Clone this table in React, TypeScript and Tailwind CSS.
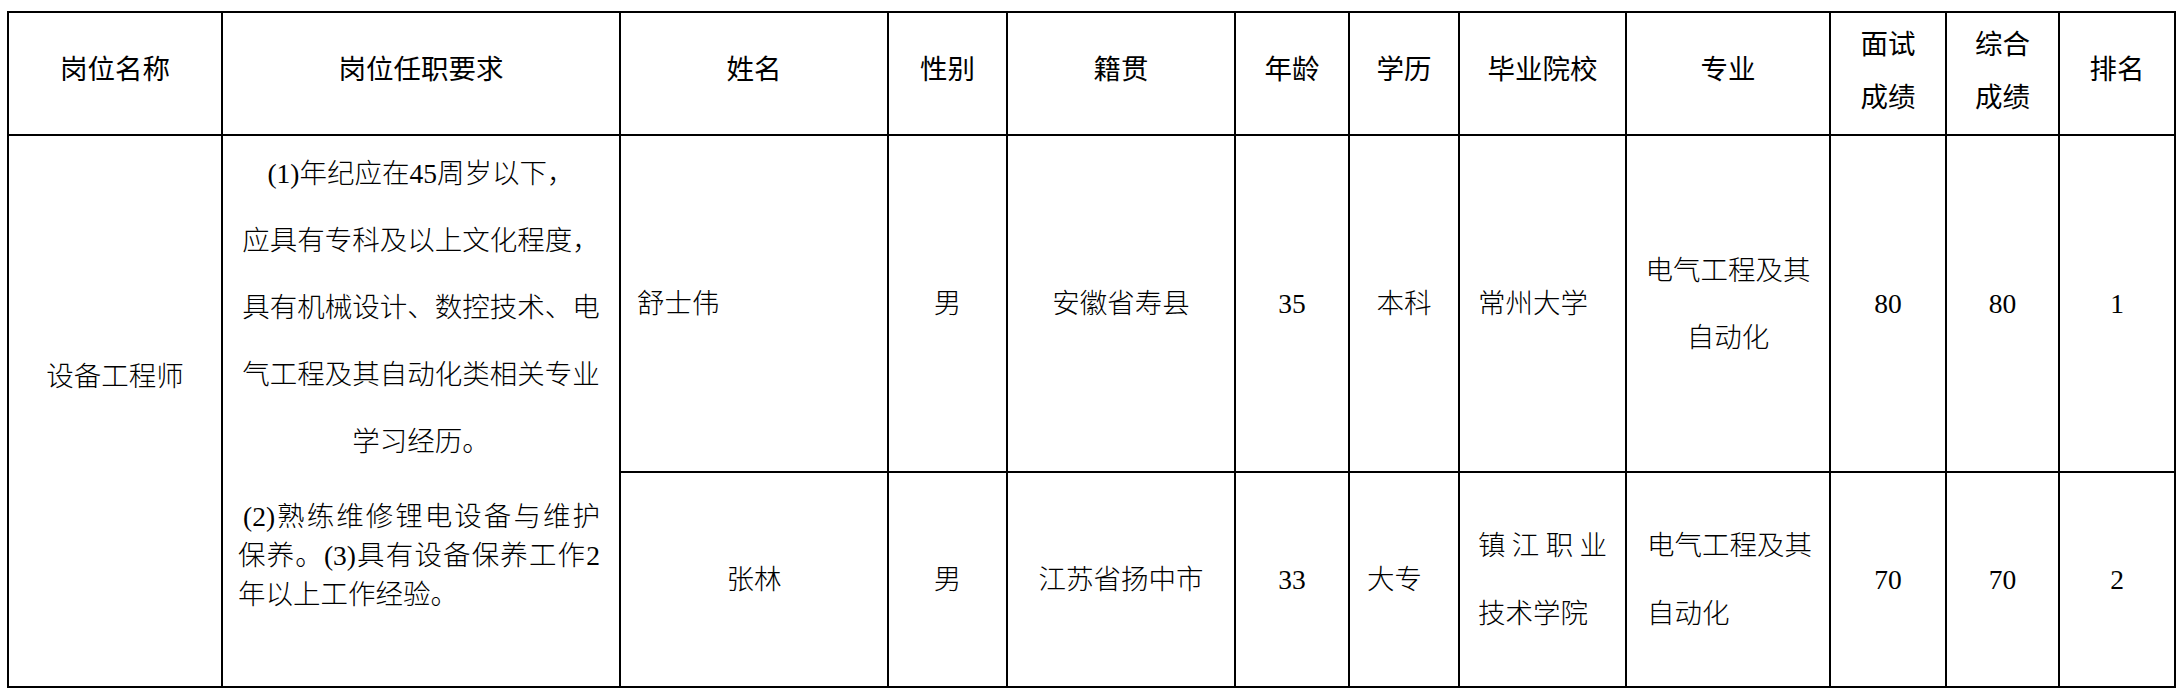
const cell = 'border-2 border-black p-0 align-middle';

const headers: (string | string[])[] = [
  '岗位名称',
  '岗位任职要求',
  '姓名',
  '性别',
  '籍贯',
  '年龄',
  '学历',
  '毕业院校',
  '专业',
  ['面试', '成绩'],
  ['综合', '成绩'],
  '排名',
];

const widths = [
  'w-[214px]',
  'w-[398px]',
  'w-[268px]',
  'w-[119px]',
  'w-[228px]',
  'w-[114px]',
  'w-[110px]',
  'w-[167px]',
  'w-[204px]',
  'w-[116px]',
  'w-[113px]',
  'w-[116px]',
];

function HeaderCell({ label }: { label: string | string[] }) {
  if (Array.isArray(label)) {
    return (
      <th className={`${cell} text-center font-normal pb-[6px]`}>
        <div className="leading-[53px]">
          {label.map((l) => (
            <div key={l}>{l}</div>
          ))}
        </div>
      </th>
    );
  }
  return <th className={`${cell} text-center font-normal pb-[8px]`}>{label}</th>;
}

export default function App() {
  return (
    <div className="min-h-screen bg-white pl-[7px] pt-[11px] text-[27.5px] leading-none font-light text-black font-['Liberation_Serif','Noto_Sans_CJK_SC',serif]">
      <table className="w-[2168px] table-fixed border-collapse border-2 border-black">
        <colgroup>
          {widths.map((w, i) => (
            <col key={i} className={w} />
          ))}
        </colgroup>
        <thead>
          <tr className="h-[123px]">
            {headers.map((h, i) => (
              <HeaderCell key={i} label={h} />
            ))}
          </tr>
        </thead>
        <tbody>
          <tr className="h-[337px]">
            <td rowSpan={2} className={`${cell} text-center pb-[68px]`}>
              设备工程师
            </td>
            <td rowSpan={2} className={`${cell} align-top px-[15px] pt-[4px]`}>
              <div className="text-center leading-[67px]">
                <div>(1)年纪应在45周岁以下，</div>
                <div>应具有专科及以上文化程度，</div>
                <div>具有机械设计、数控技术、电</div>
                <div>气工程及其自动化类相关专业</div>
                <div>学习经历。</div>
              </div>
              <div className="mt-[22px] leading-[39px] pr-[4px]">
                <div className="text-justify [text-align-last:justify] pl-[5px]">(2)熟练维修锂电设备与维护</div>
                <div className="text-justify [text-align-last:justify]">保养。(3)具有设备保养工作2</div>
                <div>年以上工作经验。</div>
              </div>
            </td>
            <td className={`${cell} text-left pl-[16px]`}>舒士伟</td>
            <td className={`${cell} text-center`}>男</td>
            <td className={`${cell} text-center`}>安徽省寿县</td>
            <td className={`${cell} text-center`}>35</td>
            <td className={`${cell} text-center`}>本科</td>
            <td className={`${cell} text-left pl-[18px]`}>常州大学</td>
            <td className={`${cell} text-center leading-[67px]`}>
              <div>电气工程及其</div>
              <div>自动化</div>
            </td>
            <td className={`${cell} text-center`}>80</td>
            <td className={`${cell} text-center`}>80</td>
            <td className={`${cell} text-center`}>1</td>
          </tr>
          <tr className="h-[215px]">
            <td className={`${cell} text-center`}>张林</td>
            <td className={`${cell} text-center`}>男</td>
            <td className={`${cell} text-center`}>江苏省扬中市</td>
            <td className={`${cell} text-center`}>33</td>
            <td className={`${cell} text-left pl-[17px]`}>大专</td>
            <td className={`${cell} text-left px-[18px] leading-[68px]`}>
              <div className="text-justify [text-align-last:justify]">镇江职业</div>
              <div>技术学院</div>
            </td>
            <td className={`${cell} text-left pl-[20px] leading-[68px]`}>
              <div>电气工程及其</div>
              <div>自动化</div>
            </td>
            <td className={`${cell} text-center`}>70</td>
            <td className={`${cell} text-center`}>70</td>
            <td className={`${cell} text-center`}>2</td>
          </tr>
        </tbody>
      </table>
    </div>
  );
}
